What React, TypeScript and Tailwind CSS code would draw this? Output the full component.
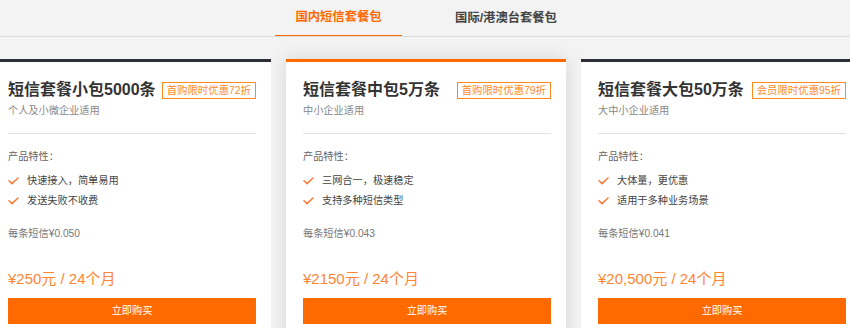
import React from "react";

const FONT = { fontFamily: '"Liberation Sans", "Noto Sans CJK SC", sans-serif' };

type Plan = {
  title: string;
  badge: string;
  sub: string;
  features: string[];
  unit: string;
  price: string;
  top: "dark" | "orange";
  shadow?: boolean;
};

const plans: Plan[] = [
  {
    title: "短信套餐小包5000条",
    badge: "首购限时优惠72折",
    sub: "个人及小微企业适用",
    features: ["快速接入，简单易用", "发送失败不收费"],
    unit: "每条短信¥0.050",
    price: "¥250元 / 24个月",
    top: "dark",
  },
  {
    title: "短信套餐中包5万条",
    badge: "首购限时优惠79折",
    sub: "中小企业适用",
    features: ["三网合一，极速稳定", "支持多种短信类型"],
    unit: "每条短信¥0.043",
    price: "¥2150元 / 24个月",
    top: "orange",
    shadow: true,
  },
  {
    title: "短信套餐大包50万条",
    badge: "会员限时优惠95折",
    sub: "大中小企业适用",
    features: ["大体量，更优惠", "适用于多种业务场景"],
    unit: "每条短信¥0.041",
    price: "¥20,500元 / 24个月",
    top: "dark",
  },
];

function Check() {
  return (
    <svg width="11" height="8" viewBox="0 0 11 8" className="shrink-0">
      <polyline
        points="1,3.8 4,6.6 10,1"
        fill="none"
        stroke="#ff7a33"
        strokeWidth="1.5"
        strokeLinecap="round"
        strokeLinejoin="round"
      />
    </svg>
  );
}

function Card({ p }: { p: Plan }) {
  return (
    <div
      className={`relative w-[280px] shrink-0 h-[290px] bg-white border-t-[3px] pl-[17px] pr-[15px] pt-[16px] ${
        p.top === "orange" ? "border-[#ff6a00] z-0 shadow-[0_0_18px_rgba(0,0,0,0.12)]" : "border-[#2b2f34] z-10"
      }`}
    >
      <div className="flex items-center justify-between h-[24px]">
        <div className="text-[16px] font-bold text-[#333333] leading-[24px] whitespace-nowrap">{p.title}</div>
        <div className="h-[17px] px-[4px] border border-[#ff8a1f] text-[#ff8a1f] text-[10.4px] leading-[15px] whitespace-nowrap">
          {p.badge}
        </div>
      </div>
      <div className="mt-[2px] text-[10.2px] leading-[14px] text-[#888888]">{p.sub}</div>
      <div className="mt-[15px] h-px bg-[#e3e3e3]" />
      <div className="mt-[16px] text-[10.2px] leading-[14px] text-[#666666]">产品特性：</div>
      <div className="mt-[7px] flex flex-col">
        {p.features.map((f) => (
          <div key={f} className="flex items-center h-[20px]">
            <Check />
            <span className="ml-[8px] text-[10.2px] text-[#444444]">{f}</span>
          </div>
        ))}
      </div>
      <div className="mt-[16px] text-[10.2px] leading-[14px] text-[#777777]">{p.unit}</div>
      <div className="mt-[28px] text-[15px] leading-[20px] text-[#ff8533] whitespace-nowrap">{p.price}</div>
      <button className="mt-[9px] w-full h-[26px] bg-[#ff6a00] text-white text-[10.2px] flex items-center justify-center">
        立即购买
      </button>
    </div>
  );
}

export default function App() {
  return (
    <div className="w-[850px] h-[328px] overflow-hidden bg-[#f3f3f3]" style={FONT}>
      <div className="h-[37px] border-b border-[#dcdcdc] flex justify-center gap-[32px] pl-[3px]">
        <div className="w-[127px] h-[36px] flex items-center justify-center border-b border-[#ff6a00] text-[12.3px] font-bold text-[#ff6a00]">
          国内短信套餐包
        </div>
        <div className="w-[144px] h-[36px] flex items-center justify-center text-[12.3px] font-bold text-[#444444]">
          国际/港澳台套餐包
        </div>
      </div>
      <div className="mt-[22px] flex justify-center gap-[15px] pl-[2px]">
        {plans.map((p) => (
          <Card key={p.title} p={p} />
        ))}
      </div>
    </div>
  );
}
